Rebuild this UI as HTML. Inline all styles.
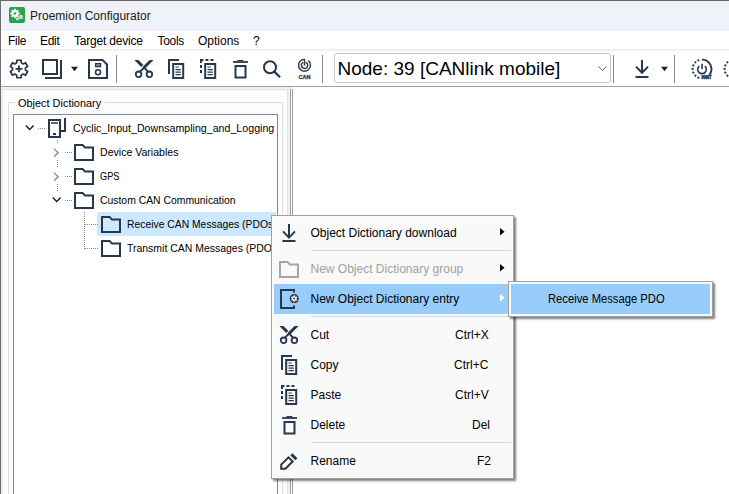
<!DOCTYPE html>
<html><head><meta charset="utf-8">
<style>
*{margin:0;padding:0;box-sizing:border-box}
html,body{width:729px;height:494px;overflow:hidden;background:#fff}
body{position:relative;font-family:"Liberation Sans",sans-serif;font-size:12px;color:#000}
.a{position:absolute}
.t{position:absolute;white-space:pre;line-height:14px;height:14px}
body>svg{position:absolute;overflow:visible}
.ic{fill:none;stroke:#28374a}
</style></head><body>

<!-- window frame -->
<div class="a" style="left:0;top:0;width:729px;height:1px;background:#646464"></div>
<div class="a" style="left:0;top:0;width:1px;height:494px;background:#6e6e6e"></div>

<!-- title bar -->
<div class="a" style="left:1px;top:1px;width:728px;height:30px;background:#eff2f8"></div>
<div class="a" style="left:9px;top:7px;width:16px;height:16px;background:#2aa34c;border-radius:2px"></div>
<svg style="left:9px;top:7px" width="16" height="16" viewBox="0 0 16 16">
  <circle cx="6" cy="6.5" r="3.6" fill="#fff"/>
  <g stroke="#fff" stroke-width="1.6">
   <line x1="6" y1="1.8" x2="6" y2="11.2"/><line x1="1.3" y1="6.5" x2="10.7" y2="6.5"/>
   <line x1="2.7" y1="3.2" x2="9.3" y2="9.8"/><line x1="9.3" y1="3.2" x2="2.7" y2="9.8"/>
  </g>
  <circle cx="6" cy="6.5" r="1.3" fill="#2aa34c"/>
  <circle cx="11.9" cy="10" r="2.3" fill="#bfe0c6"/>
  <circle cx="8.4" cy="11.8" r="1.5" fill="#e8f4ea"/>
  <circle cx="8.4" cy="11.8" r="0.5" fill="#2aa34c"/>
</svg>
<div class="t" style="left:30px;top:9px;color:#1a1a1a">Proemion Configurator</div>

<!-- menu bar -->
<div class="t" style="left:8px;top:33.5px;letter-spacing:-0.3px">File</div>
<div class="t" style="left:40px;top:33.5px;letter-spacing:-0.3px">Edit</div>
<div class="t" style="left:74px;top:33.5px;letter-spacing:-0.2px">Target device</div>
<div class="t" style="left:157.5px;top:33.5px;letter-spacing:-0.3px">Tools</div>
<div class="t" style="left:198px;top:33.5px">Options</div>
<div class="t" style="left:253px;top:33.5px">?</div>
<div class="a" style="left:1px;top:49px;width:728px;height:2px;background:#f0f0f0"></div>

<!-- toolbar -->
<div class="a" style="left:1px;top:86px;width:728px;height:1px;background:#a0a0a0"></div>
<!-- separators -->
<div class="a" style="left:116px;top:55px;width:1px;height:28px;background:#8c8c8c"></div>
<div class="a" style="left:322px;top:55px;width:1px;height:28px;background:#8c8c8c"></div>
<div class="a" style="left:613px;top:55px;width:1px;height:28px;background:#8c8c8c"></div>
<div class="a" style="left:674px;top:55px;width:1px;height:28px;background:#8c8c8c"></div>

<!-- gear -->
<svg style="left:9px;top:59px" width="20" height="20" viewBox="0 0 20 20">
 <polygon class="ic" stroke-width="1.7" stroke-linejoin="round" points="7.74,3.80 7.82,1.27 12.18,1.27 12.26,3.80 14.24,4.94 16.47,3.75 18.65,7.52 16.50,8.85 16.50,11.15 18.65,12.48 16.47,16.25 14.24,15.06 12.26,16.20 12.18,18.73 7.82,18.73 7.74,16.20 5.76,15.06 3.53,16.25 1.35,12.48 3.50,11.15 3.50,8.85 1.35,7.52 3.53,3.75 5.76,4.94"/>
 <path class="ic" stroke-width="1.8" d="M10 6.6V13.2M6.6 9.9H13.4"/>
</svg>
<!-- window icon -->
<svg style="left:42px;top:59px" width="22" height="20" viewBox="0 0 22 20">
 <rect class="ic" stroke-width="2" x="1" y="1" width="14" height="14"/>
 <path class="ic" stroke-width="2" d="M19 1V19H3"/>
</svg>
<svg style="left:70px;top:66px" width="9" height="6" viewBox="0 0 9 6"><path d="M1 0.8H8L4.5 5.2Z" fill="#202020"/></svg>
<!-- save -->
<svg style="left:88px;top:59px" width="20" height="20" viewBox="0 0 20 20">
 <path class="ic" stroke-width="2" d="M1 1H14.5L19 5.5V19H1Z"/>
 <rect x="7.6" y="4.6" width="5" height="3" fill="#8a939c" stroke="#28374a" stroke-width="1.3"/>
 <circle class="ic" stroke-width="1.6" cx="10" cy="13.3" r="2.5"/>
</svg>
<!-- cut -->
<svg id="cut1" style="left:134px;top:59px" width="20" height="20" viewBox="0 0 20 20">
<svg x="0" y="1" width="20" height="19" viewBox="0 1 20 19" overflow="hidden"><g class="ic" stroke-width="2.9"><path d="M1.6 0.2L8.3 6.9M18.4 0.2L9.7 8.9"/></g><g class="ic" stroke-width="2"><path d="M10.4 8.9L14 12.6M10.6 8L6 12.6"/></g></svg>
 <circle class="ic" stroke-width="1.8" cx="4.6" cy="15.3" r="2.8"/>
 <circle class="ic" stroke-width="1.8" cx="15.4" cy="15.3" r="2.8"/>
</svg>
<!-- copy -->
<svg style="left:168px;top:59px" width="17" height="20" viewBox="0 0 17 20">
 <path class="ic" stroke-width="2" d="M1 15V1H11"/>
 <rect class="ic" stroke-width="2" x="5.2" y="5" width="10" height="14"/>
 <path stroke="#28374a" stroke-width="1.2" d="M7.5 8H10.8M7.5 10.6H12.8M7.5 13.2H12.8M7.5 15.7H12.8"/>
</svg>
<!-- paste -->
<svg style="left:200px;top:59px" width="17" height="20" viewBox="0 0 17 20">
 <path stroke="#28374a" stroke-width="2" fill="none" d="M1 4V1H3.5M5.5 1H8.5M10.5 1H13.5M1 6V9M1 11V14"/>
 <rect class="ic" stroke-width="2" x="5.2" y="5" width="10" height="14"/>
 <path stroke="#28374a" stroke-width="1.2" d="M7.5 8H10.8M7.5 10.6H12.8M7.5 13.2H12.8M7.5 15.7H12.8"/>
</svg>
<!-- trash -->
<svg style="left:233px;top:59px" width="16" height="20" viewBox="0 0 16 20">
 <path stroke="#28374a" stroke-width="1.8" d="M0 3H15"/>
 <path stroke="#28374a" stroke-width="1.2" d="M4.5 1.6H10.3"/>
 <rect class="ic" stroke-width="2" x="2.5" y="7" width="10" height="11.5"/>
</svg>
<!-- search -->
<svg style="left:262px;top:59px" width="20" height="20" viewBox="0 0 20 20">
 <circle class="ic" stroke-width="2" cx="8" cy="8.2" r="6"/>
 <path class="ic" stroke-width="2.2" d="M12.3 12.6L18 18.3"/>
</svg>
<!-- CAN -->
<svg style="left:297px;top:59px" width="16" height="20" viewBox="0 0 16 20">
 <path class="ic" stroke-width="1.45" d="M11.36 1.6A6 6 0 1 1 7.5 0.2"/>
 <path class="ic" stroke-width="1.45" d="M8.85 3.3A3.2 3.2 0 1 1 6.15 3.3"/>
 <path class="ic" stroke-width="1.45" d="M7.5 0.2V6.6"/>
 <text x="7.4" y="19.5" font-family="Liberation Sans" font-weight="bold" font-size="5.5" text-anchor="middle" fill="#2a3a4e" stroke="#2a3a4e" stroke-width="0.3">CAN</text>
</svg>

<!-- combobox -->
<div class="a" style="left:334px;top:53px;width:277px;height:30px;border:1px solid #c9c9c9;border-radius:3px;background:#fff"></div>
<div class="t" style="left:337.5px;top:58px;font-size:19px;line-height:22px;height:22px;letter-spacing:0px">Node: 39 [CANlink mobile]</div>
<svg style="left:598px;top:66px" width="9" height="6" viewBox="0 0 9 6"><path d="M0.5 0.5L4.5 4.5L8.5 0.5" fill="none" stroke="#606060" stroke-width="1"/></svg>

<!-- download -->
<svg class="dl" style="left:635px;top:59px" width="14" height="20" viewBox="0 0 14 20">
 <path class="ic" stroke-width="2" d="M7 1V13.8M1 7.6L7 13.8L13 7.6"/>
 <path class="ic" stroke-width="2" d="M0.5 18H13.5"/>
</svg>
<svg style="left:660px;top:66px" width="9" height="6" viewBox="0 0 9 6"><path d="M1 0.8H8L4.5 5.2Z" fill="#202020"/></svg>

<!-- NMT -->
<svg style="left:691px;top:58px" width="22" height="22" viewBox="0 0 22 22">
 <path class="ic" stroke-width="1.9" d="M11 1.6A9.4 9.4 0 0 1 18.4 16.8"/>
 <g fill="#28374a"><circle cx="7.40" cy="2.32" r="1.15"/><circle cx="4.35" cy="4.35" r="1.15"/><circle cx="2.32" cy="7.40" r="1.15"/><circle cx="1.60" cy="11.00" r="1.15"/><circle cx="2.32" cy="14.60" r="1.15"/><circle cx="4.35" cy="17.65" r="1.15"/><circle cx="7.40" cy="19.68" r="1.15"/></g>
 <path class="ic" stroke-width="1.6" d="M13.8 8.1A4.3 4.3 0 1 1 8.2 8.1"/>
 <path class="ic" stroke-width="1.6" d="M11 5.8V11"/>
 <rect x="9.6" y="16.8" width="12" height="5" fill="#fff"/>
 <text x="15.6" y="21" font-family="Liberation Sans" font-weight="bold" font-size="5.2" text-anchor="middle" fill="#28374a" stroke="#28374a" stroke-width="0.5" transform="translate(15.6 0) scale(0.9 1) translate(-15.6 0)">NMT</text>
</svg>
<svg style="left:723px;top:58px" width="22" height="22" viewBox="0 0 22 22">
 <g fill="#28374a"><circle cx="4.35" cy="4.35" r="1.15"/><circle cx="2.32" cy="7.40" r="1.15"/><circle cx="1.60" cy="11.00" r="1.15"/><circle cx="2.32" cy="14.60" r="1.15"/><circle cx="4.35" cy="17.65" r="1.15"/></g>
</svg>


<!-- left panel -->
<div class="a" style="left:1px;top:87px;width:289px;height:407px;background:#f0f0f0"></div>
<div class="a" style="left:2px;top:89px;width:286px;height:405px;background:#fcfcfc;border-left:1px solid #e3e3e3;border-top:1px solid #e3e3e3;border-right:1px solid #e3e3e3"></div>
<!-- group box -->
<div class="a" style="left:8px;top:102px;width:275px;height:400px;border:1px solid #dcdcdc"></div>
<div class="a" style="left:16px;top:96px;width:88px;height:12px;background:#fcfcfc"></div>
<div class="t" style="left:18px;top:95.5px;font-size:11px;transform:scaleX(0.993);transform-origin:0 0">Object Dictionary</div>
<!-- tree box -->
<div class="a" style="left:13px;top:114px;width:265px;height:390px;border:1px solid #828790;background:#fff"></div>
<!-- splitter -->
<div class="a" style="left:290px;top:89px;width:1px;height:405px;background:#a0a0a0"></div>
<div class="a" style="left:291px;top:89px;width:1px;height:405px;background:#f8f8f8"></div>
<div class="a" style="left:292px;top:89px;width:1px;height:405px;background:#a0a0a0"></div>
<div class="a" style="left:288px;top:87px;width:5px;height:2px;background:#f0f0f0"></div>

<!-- tree -->
<svg style="left:25px;top:125px" width="10" height="6" viewBox="0 0 10 6"><path d="M0.8 0.6L4.7 4.6L8.6 0.6" fill="none" stroke="#1e1e1e" stroke-width="1.4"/></svg>
<div class="a" style="left:38px;top:128px;width:8px;height:1px;background:repeating-linear-gradient(90deg,#8a8a8a 0 1px,transparent 1px 2px)"></div>
<svg style="left:47px;top:118px" width="20" height="21" viewBox="0 0 20 21">
 <rect class="ic" stroke-width="2" x="2" y="2" width="11" height="17"/>
 <path stroke="#28374a" stroke-width="1.5" d="M4 5H11"/>
 <rect x="6" y="15" width="3" height="2" fill="#28374a"/>
 <path class="ic" stroke-width="2" d="M13 13H18V0"/>
</svg>
<div class="t" style="left:72.5px;top:120.5px;font-size:11px;transform:scaleX(0.968);transform-origin:0 0">Cyclic_Input_Downsampling_and_Logging</div>

<div class="a" style="left:57px;top:140px;width:1px;height:4px;background:repeating-linear-gradient(180deg,#8a8a8a 0 1px,transparent 1px 2px)"></div>
<div class="a" style="left:57px;top:160px;width:1px;height:8px;background:repeating-linear-gradient(180deg,#8a8a8a 0 1px,transparent 1px 2px)"></div>
<div class="a" style="left:57px;top:184px;width:1px;height:8px;background:repeating-linear-gradient(180deg,#8a8a8a 0 1px,transparent 1px 2px)"></div>

<svg style="left:53px;top:148px" width="7" height="10" viewBox="0 0 7 10"><path d="M1 0.8L5.2 4.8L1 8.8" fill="none" stroke="#8c8c8c" stroke-width="1.4"/></svg>
<svg style="left:53px;top:172px" width="7" height="10" viewBox="0 0 7 10"><path d="M1 0.8L5.2 4.8L1 8.8" fill="none" stroke="#8c8c8c" stroke-width="1.4"/></svg>
<svg style="left:52px;top:197px" width="10" height="6" viewBox="0 0 10 6"><path d="M0.8 0.6L4.7 4.6L8.6 0.6" fill="none" stroke="#1e1e1e" stroke-width="1.4"/></svg>
<div class="a" style="left:65px;top:152px;width:8px;height:1px;background:repeating-linear-gradient(90deg,#8a8a8a 0 1px,transparent 1px 2px)"></div>
<div class="a" style="left:65px;top:176px;width:8px;height:1px;background:repeating-linear-gradient(90deg,#8a8a8a 0 1px,transparent 1px 2px)"></div>
<div class="a" style="left:65px;top:200px;width:8px;height:1px;background:repeating-linear-gradient(90deg,#8a8a8a 0 1px,transparent 1px 2px)"></div>

<svg style="left:74px;top:144px" width="20" height="17" viewBox="0 0 20 17"><path class="ic" stroke-width="2" d="M1 1H8.6L11 3.6H19V16H1Z"/></svg>
<svg style="left:74px;top:168px" width="20" height="17" viewBox="0 0 20 17"><path class="ic" stroke-width="2" d="M1 1H8.6L11 3.6H19V16H1Z"/></svg>
<svg style="left:74px;top:192px" width="20" height="17" viewBox="0 0 20 17"><path class="ic" stroke-width="2" d="M1 1H8.6L11 3.6H19V16H1Z"/></svg>
<div class="t" style="left:99.5px;top:144.5px;font-size:11px;transform:scaleX(0.960);transform-origin:0 0">Device Variables</div>
<div class="t" style="left:99.5px;top:168.5px;font-size:11px;transform:scaleX(0.840);transform-origin:0 0">GPS</div>
<div class="t" style="left:99.5px;top:192.5px;font-size:11px;transform:scaleX(0.944);transform-origin:0 0">Custom CAN Communication</div>

<!-- selection -->
<div class="a" style="left:97px;top:212px;width:179px;height:24px;background:#cce8ff;border-radius:2px 0 0 2px"></div>
<div class="a" style="left:84px;top:212px;width:1px;height:37px;background:repeating-linear-gradient(180deg,#8a8a8a 0 1px,transparent 1px 2px)"></div>
<div class="a" style="left:85px;top:224px;width:14px;height:1px;background:repeating-linear-gradient(90deg,#8a8a8a 0 1px,transparent 1px 2px)"></div>
<div class="a" style="left:85px;top:248px;width:14px;height:1px;background:repeating-linear-gradient(90deg,#8a8a8a 0 1px,transparent 1px 2px)"></div>
<svg style="left:101px;top:216px" width="20" height="17" viewBox="0 0 20 17"><path class="ic" stroke-width="2" d="M1 1H8.6L11 3.6H19V16H1Z"/></svg>
<svg style="left:101px;top:240px" width="20" height="17" viewBox="0 0 20 17"><path class="ic" stroke-width="2" d="M1 1H8.6L11 3.6H19V16H1Z"/></svg>
<div class="t" style="left:126.5px;top:216.5px;font-size:11px;transform:scaleX(0.941);transform-origin:0 0">Receive CAN Messages (PDOs)</div>
<div class="t" style="left:126.5px;top:240.5px;font-size:11px;transform:scaleX(0.951);transform-origin:0 0">Transmit CAN Messages (PDOs)</div>
<!-- cover tree overflow beyond border -->
<div class="a" style="left:277px;top:115px;width:1px;height:379px;background:#828790"></div>
<div class="a" style="left:278px;top:115px;width:4px;height:379px;background:#fcfcfc"></div>
<div class="a" style="left:282px;top:102px;width:1px;height:392px;background:#dcdcdc"></div>
<div class="a" style="left:283px;top:90px;width:4px;height:404px;background:#fcfcfc"></div>
<div class="a" style="left:287px;top:89px;width:1px;height:405px;background:#e3e3e3"></div>
<div class="a" style="left:288px;top:87px;width:2px;height:407px;background:#f0f0f0"></div>

<!-- context menu -->
<div class="a" style="left:271px;top:215px;width:243px;height:264px;background:#f9f9f9;border:1px solid #a0a0a0;box-shadow:2px 2px 2px rgba(0,0,0,0.5),inset 0 0 0 1px #fcfcfc"></div>


<!-- menu items -->
<svg style="left:282px;top:224px" width="14" height="20" viewBox="0 0 14 20">
 <path class="ic" stroke-width="2" d="M7 0V13.6M1 7.4L7 13.6L13 7.4"/>
 <path class="ic" stroke-width="2" d="M0.5 17H13.5"/>
</svg>
<div class="t" style="left:310.5px;top:225.5px">Object Dictionary download</div>
<svg style="left:500px;top:228px" width="5" height="8" viewBox="0 0 5 8"><path d="M0 0L4.5 3.8L0 7.6Z" fill="#000"/></svg>
<div class="a" style="left:311px;top:250px;width:200px;height:1px;background:#d7d7d7"></div>

<svg style="left:279px;top:261px" width="20" height="17" viewBox="0 0 20 17"><path fill="none" stroke="#a6a6a6" stroke-width="2" d="M1 1H8.6L11 3.6H19V16H1Z"/></svg>
<div class="t" style="left:310.5px;top:262px;color:#a0a0a0">New Object Dictionary group</div>
<svg style="left:500px;top:264px" width="5" height="8" viewBox="0 0 5 8"><path d="M0 0L4.5 3.8L0 7.6Z" fill="#000"/></svg>

<div class="a" style="left:274px;top:284px;width:235px;height:30px;background:#98ccfa"></div>
<svg style="left:279px;top:288px" width="22" height="22" viewBox="0 0 22 22">
 <path class="ic" stroke-width="2" d="M15 4.5V2H2V20H15V17.5"/>
 <circle cx="15.2" cy="10.6" r="5" fill="#28374a" stroke="#eef6fd" stroke-width="0.6"/>
 <polygon fill="#fff" points="14.41,8.44 14.57,7.36 15.83,7.36 15.99,8.44 16.68,8.84 17.69,8.44 18.32,9.53 17.47,10.20 17.47,11.00 18.32,11.67 17.69,12.76 16.68,12.36 15.99,12.76 15.83,13.84 14.57,13.84 14.41,12.76 13.72,12.36 12.71,12.76 12.08,11.67 12.93,11.00 12.93,10.20 12.08,9.53 12.71,8.44 13.72,8.84"/>
 <circle cx="15.2" cy="10.6" r="1" fill="#28374a"/>
</svg>
<div class="t" style="left:310.5px;top:292px">New Object Dictionary entry</div>
<svg style="left:500px;top:294px" width="5" height="8" viewBox="0 0 5 8"><path d="M0 0L4.5 3.8L0 7.6Z" fill="#fff"/></svg>
<div class="a" style="left:311px;top:316px;width:200px;height:1px;background:#d7d7d7"></div>

<svg style="left:279px;top:325px" width="20" height="20" viewBox="0 0 20 20"><svg x="0" y="1" width="20" height="19" viewBox="0 1 20 19" overflow="hidden"><g class="ic" stroke-width="2.9"><path d="M1.6 0.2L8.3 6.9M18.4 0.2L9.7 8.9"/></g><g class="ic" stroke-width="2"><path d="M10.4 8.9L14 12.6M10.6 8L6 12.6"/></g></svg><circle class="ic" stroke-width="1.8" cx="4.6" cy="15.3" r="2.8"/><circle class="ic" stroke-width="1.8" cx="15.4" cy="15.3" r="2.8"/></svg>
<div class="t" style="left:310.5px;top:327.5px">Cut</div>
<div class="t" style="left:455px;top:327.5px">Ctrl+X</div>

<svg style="left:281px;top:355px" width="17" height="20" viewBox="0 0 17 20">
 <path class="ic" stroke-width="2" d="M1 15V1H11"/>
 <rect class="ic" stroke-width="2" x="5.2" y="5" width="10" height="14"/>
 <path stroke="#28374a" stroke-width="1.2" d="M7.5 8H10.8M7.5 10.6H12.8M7.5 13.2H12.8M7.5 15.7H12.8"/>
</svg>
<div class="t" style="left:310.5px;top:357.5px">Copy</div>
<div class="t" style="left:454px;top:357.5px">Ctrl+C</div>

<svg style="left:281px;top:385px" width="17" height="20" viewBox="0 0 17 20">
 <path stroke="#28374a" stroke-width="2" fill="none" d="M1 4V1H3.5M5.5 1H8.5M10.5 1H13.5M1 6V9M1 11V14"/>
 <rect class="ic" stroke-width="2" x="5.2" y="5" width="10" height="14"/>
 <path stroke="#28374a" stroke-width="1.2" d="M7.5 8H10.8M7.5 10.6H12.8M7.5 13.2H12.8M7.5 15.7H12.8"/>
</svg>
<div class="t" style="left:310.5px;top:388px">Paste</div>
<div class="t" style="left:455px;top:388px">Ctrl+V</div>

<svg style="left:282px;top:415px" width="16" height="20" viewBox="0 0 16 20">
 <path stroke="#28374a" stroke-width="1.8" d="M0 3H15"/>
 <path stroke="#28374a" stroke-width="1.2" d="M4.5 1.6H10.3"/>
 <rect class="ic" stroke-width="2" x="2.5" y="7" width="10" height="11.5"/>
</svg>
<div class="t" style="left:310.5px;top:418px">Delete</div>
<div class="t" style="left:472px;top:418px">Del</div>
<div class="a" style="left:311px;top:442px;width:200px;height:1px;background:#d7d7d7"></div>

<svg style="left:278px;top:450px" width="22" height="22" viewBox="0 0 22 22">
 <path class="ic" stroke-width="2" stroke-linejoin="miter" d="M3.2 14.6L10.5 7.3L14.7 11.5L7.4 18.8H3.2Z"/>
 <path stroke="#28374a" stroke-width="3" d="M13.4 4.3L18.4 9.3"/>
</svg>
<div class="t" style="left:310.5px;top:454px">Rename</div>
<div class="t" style="left:477px;top:454px">F2</div>

<!-- submenu -->
<div class="a" style="left:508px;top:281px;width:205px;height:36px;background:#f9f9f9;border:1px solid #a0a0a0;box-shadow:2px 2px 2px rgba(0,0,0,0.5)"></div>
<div class="a" style="left:511px;top:284px;width:199px;height:30px;background:#98ccfa"></div>
<div class="t" style="left:547.5px;top:291.5px;transform:scaleX(0.935);transform-origin:0 0">Receive Message PDO</div>

</body></html>
